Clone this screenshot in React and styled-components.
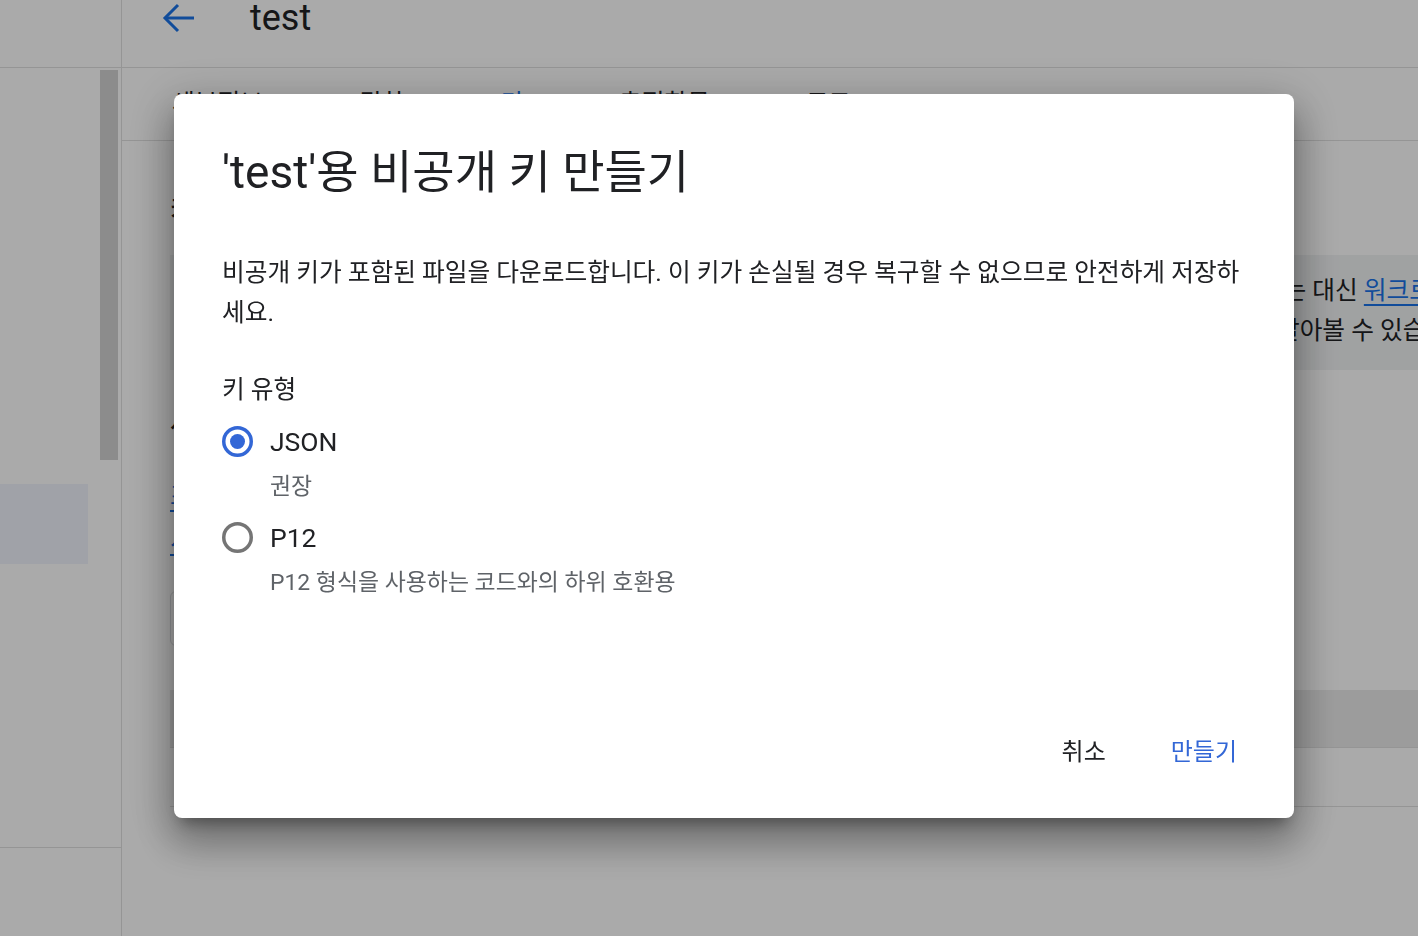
import React from 'react';
import styled, { createGlobalStyle } from 'styled-components';

const GlobalStyle = createGlobalStyle`
  html, body {
    margin: 0;
    padding: 0;
    height: 100%;
    overflow: hidden;
  }
  body {
    font-family: Roboto, "Noto Sans CJK KR", sans-serif;
    color: #202124;
    background: #fff;
  }
  #root {
    height: 100%;
  }
`;

const Page = styled.div`
  display: flex;
  height: 100vh;
  width: 100%;
  background: #fff;
`;

const Sidebar = styled.aside`
  width: 121px;
  flex: none;
  display: flex;
  flex-direction: column;
  border-right: 1px solid #e0e0e0;
`;

const SidebarHeader = styled.div`
  height: 67px;
  flex: none;
  border-bottom: 1px solid #e0e0e0;
`;

const SidebarBody = styled.div`
  flex: 1;
  display: flex;
  min-height: 0;
`;

const NavList = styled.nav`
  flex: 1;
  padding-top: 16px;
  display: flex;
  flex-direction: column;
`;

const NavItem = styled.div`
  height: 80px;
  margin-right: 12px;
  background: ${({ $active }) => ($active ? '#f0f4fd' : 'transparent')};
`;

const ScrollTrack = styled.div`
  width: 18px;
  margin-right: 3px;
  padding-top: 2px;
`;

const ScrollThumb = styled.div`
  height: 390px;
  background: #d2d2d2;
`;

const SidebarFooter = styled.div`
  height: 88px;
  flex: none;
  border-top: 1px solid #e0e0e0;
`;

const Main = styled.main`
  flex: 1;
  min-width: 0;
  display: flex;
  flex-direction: column;
`;

const Header = styled.header`
  height: 67px;
  flex: none;
  display: flex;
  align-items: flex-start;
  gap: 54px;
  padding-left: 40px;
  border-bottom: 1px solid #e0e0e0;
`;

const BackButton = styled.div`
  height: 36px;
  display: flex;
  align-items: center;
  color: #1a73e8;
`;

const PageTitle = styled.h1`
  margin: 0;
  font-size: 36px;
  font-weight: 400;
  line-height: 36px;
`;

const Tabs = styled.div`
  height: 72px;
  flex: none;
  display: flex;
  align-items: center;
  gap: 96px;
  padding-left: 50px;
  border-bottom: 1px solid #e0e0e0;
`;

const Tab = styled.div`
  font-size: 24.7px;
  line-height: 32px;
  color: ${({ $active }) => ($active ? '#1a73e8' : '#202124')};
`;

const Content = styled.section`
  display: flex;
  flex-direction: column;
  padding-left: 48px;
`;

const SectionTitle = styled.h2`
  margin: ${({ $top }) => $top}px 0 0;
  font-size: 26px;
  font-weight: 500;
  line-height: 40px;
`;

const InfoBox = styled.div`
  margin-top: 25px;
  display: flex;
  gap: 34px;
  padding: 16px 0 19px 24px;
  background: #f1f3f4;
  white-space: nowrap;
  overflow: hidden;
`;

const InfoIcon = styled.div`
  width: 32px;
  height: 40px;
  display: flex;
  align-items: center;
  color: #1a73e8;
  flex: none;
`;

const InfoText = styled.div`
  font-size: 24.7px;
  line-height: 40px;
  color: #202124;
`;

const Link = styled.a`
  color: #1a73e8;
  text-decoration: underline;
  text-underline-offset: 5px;
`;

const Paragraph = styled.p`
  margin: 32px 0 0;
  font-size: 24.7px;
  line-height: 44px;
  white-space: nowrap;
`;

const OutlineButton = styled.div`
  margin-top: 28px;
  width: 180px;
  height: 55px;
  box-sizing: border-box;
  border: 1px solid #dadce0;
  border-radius: 6px;
`;

const Table = styled.div`
  margin-top: 44px;
  display: flex;
  flex-direction: column;
`;

const TableRow = styled.div`
  height: ${({ $h }) => $h}px;
  background: ${({ $head }) => ($head ? '#ebebeb' : 'transparent')};
  border-bottom: 1px solid #e0e0e0;
`;

const Overlay = styled.div`
  position: fixed;
  inset: 0;
  display: flex;
  align-items: flex-start;
  padding: 94px 0 0 174px;
  background: rgba(0, 0, 0, 0.335);
`;

const Dialog = styled.div`
  width: 1120px;
  height: 724px;
  box-sizing: border-box;
  display: flex;
  flex-direction: column;
  padding: 54px 48px 45px;
  background: #fff;
  border-radius: 8px;
  box-shadow: 0 11px 15px -7px rgba(0, 0, 0, 0.35),
    0 24px 38px 3px rgba(0, 0, 0, 0.26), 0 9px 46px 8px rgba(0, 0, 0, 0.16);
`;

const DialogTitle = styled.h2`
  margin: 0;
  font-size: 46px;
  font-weight: 400;
  line-height: 48px;
  color: #202124;
`;

const DialogText = styled.p`
  margin: 57px 0 0;
  font-size: 24.7px;
  line-height: 40px;
  color: #202124;
`;

const FieldLabel = styled.div`
  margin-top: 41px;
  font-size: 24.7px;
  line-height: 32px;
`;

const RadioRow = styled.label`
  margin-top: ${({ $top }) => $top}px;
  height: 48px;
  display: flex;
  align-items: center;
  gap: 17px;
  font-size: 26.5px;
  color: #202124;
`;

const RadioHint = styled.div`
  margin-top: ${({ $top }) => $top}px;
  padding-left: 48px;
  font-size: 22.9px;
  line-height: 28px;
  color: #5f6368;
`;

const Actions = styled.div`
  margin: auto -7px 0 0;
  display: flex;
  justify-content: flex-end;
  gap: 33px;
`;

const TextButton = styled.button`
  height: 48px;
  padding: 0 16px;
  border: none;
  background: none;
  font-family: inherit;
  font-size: 24px;
  color: ${({ $primary }) => ($primary ? '#3367d6' : '#202124')};
`;

const Radio = ({ checked }) => (
  <svg width="31" height="31" viewBox="0 0 31 31">
    <circle
      cx="15.5"
      cy="15.5"
      r="13.75"
      fill="none"
      stroke={checked ? '#3367d6' : '#757575'}
      strokeWidth="3.5"
    />
    {checked && <circle cx="15.5" cy="15.5" r="7.5" fill="#3367d6" />}
  </svg>
);

const App = () => (
  <>
    <GlobalStyle />
    <Page>
      <Sidebar>
        <SidebarHeader />
        <SidebarBody>
          <NavList>
            {[0, 1, 2, 3, 4, 5].map((i) => (
              <NavItem key={i} $active={i === 5} />
            ))}
          </NavList>
          <ScrollTrack>
            <ScrollThumb />
          </ScrollTrack>
        </SidebarBody>
        <SidebarFooter />
      </Sidebar>
      <Main>
        <Header>
          <BackButton>
            <svg width="34" height="30" viewBox="0 0 34 30" fill="none" stroke="currentColor" strokeWidth="3">
              <path d="M32 15H4" />
              <path d="M16 2 3 15l13 13" />
            </svg>
          </BackButton>
          <PageTitle>test</PageTitle>
        </Header>
        <Tabs>
          <Tab>세부정보</Tab>
          <Tab>권한</Tab>
          <Tab $active>키</Tab>
          <Tab>측정항목</Tab>
          <Tab>로그</Tab>
        </Tabs>
        <Content>
          <SectionTitle $top={49}>키</SectionTitle>
          <InfoBox>
            <InfoIcon>
              <svg width="28" height="28" viewBox="0 0 24 24" fill="currentColor">
                <path d="M12 2a10 10 0 1 0 0 20 10 10 0 0 0 0-20zm1 15h-2v-6h2v6zm0-8h-2V7h2v2z" />
              </svg>
            </InfoIcon>
            <InfoText>
              <div>
                서비스 계정 키는 올바르게 관리하지 않으면 보안 위험이 될 수 있습니다. 서비스 계정 키를 다운로드하는 대신{' '}
                <Link>워크로드 아이덴티티 제휴</Link>를 사용하세요.
              </div>
              <div>
                서비스 계정을 인증하는 가장 안전한 방법과 권장사항에 관한 자세한 내용은 조직의 관련 문서에서 더 알아볼 수 있습니다.
              </div>
            </InfoText>
          </InfoBox>
          <SectionTitle $top={33}>새 키 추가</SectionTitle>
          <Paragraph>
            <Link>조직 정책</Link>을 사용하여 서비스 계정 키 생성을 차단할 수 있습니다.
            <br />
            <Link>서비스 계정 보안 권장사항</Link>에 대해 자세히 알아보세요.
          </Paragraph>
          <OutlineButton />
          <Table>
            <TableRow $head $h={57} />
            <TableRow $h={58} />
          </Table>
        </Content>
      </Main>
    </Page>
    <Overlay>
      <Dialog role="dialog">
        <DialogTitle>'test'용 비공개 키 만들기</DialogTitle>
        <DialogText>
          비공개 키가 포함된 파일을 다운로드합니다. 이 키가 손실될 경우 복구할 수 없으므로 안전하게 저장하세요.
        </DialogText>
        <FieldLabel>키 유형</FieldLabel>
        <RadioRow $top={11}>
          <Radio checked />
          JSON
        </RadioRow>
        <RadioHint $top={8}>권장</RadioHint>
        <RadioRow $top={12}>
          <Radio />
          P12
        </RadioRow>
        <RadioHint $top={8}>P12 형식을 사용하는 코드와의 하위 호환용</RadioHint>
        <Actions>
          <TextButton>취소</TextButton>
          <TextButton $primary>만들기</TextButton>
        </Actions>
      </Dialog>
    </Overlay>
  </>
);

export default App;
